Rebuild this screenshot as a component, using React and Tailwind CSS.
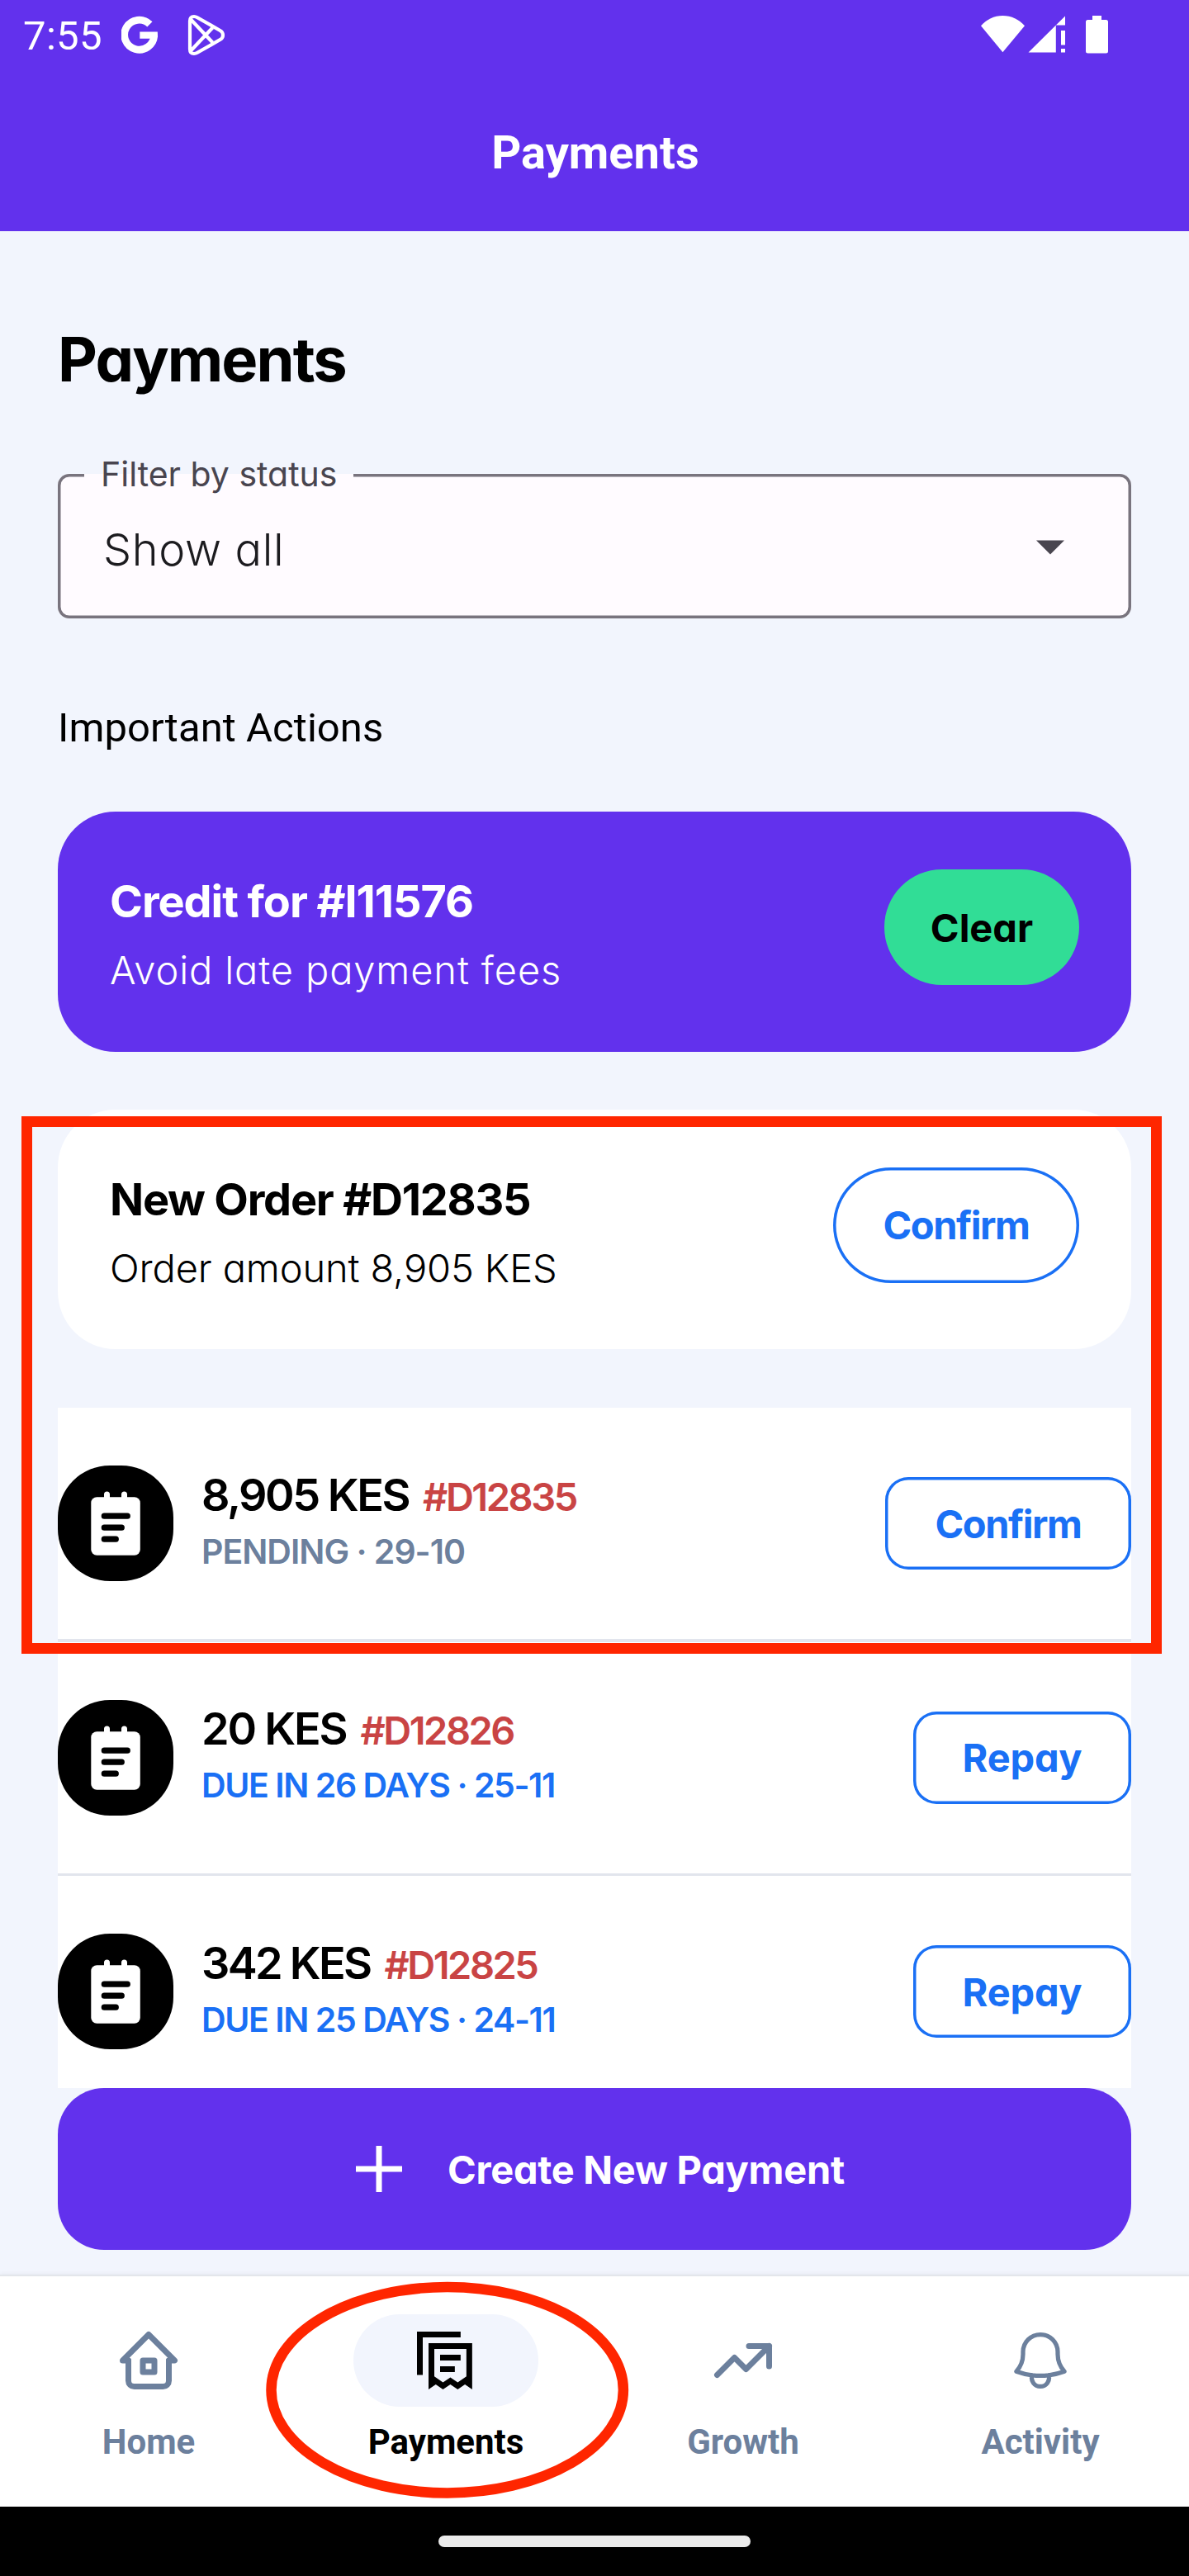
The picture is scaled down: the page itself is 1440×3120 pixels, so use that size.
import clsx from "clsx";

const brandFont = "font-['Inter',sans-serif] [font-feature-settings:'cv11']";

function StatusBar() {
  return (
    <div className="flex h-[88px] items-center pl-7 text-white">
      <span className="w-[119px] text-[49px] leading-[88px] tracking-[0.0072em]">7:55</span>
      <svg className="h-[88px] w-[44px]" viewBox="147 0 44 88">
        <path d="M181.4 29.4A18 18 0 1 0 186.7 42.6" fill="none" stroke="currentColor" strokeWidth="8.8" />
        <path d="M169.3 38.4H190.8L191 43L186 46.8H169.3Z" fill="currentColor" />
      </svg>
      <svg className="ml-9 h-[88px] w-[46px]" viewBox="227 0 46 88" fill="none" stroke="currentColor" strokeWidth="4.2">
        <path d="M230 25.5Q230 20 235 20Q237 20 239 21.2L267 37.2Q270 39 270 42.5Q270 46 267 47.8L239 63.8Q237 65 235 65Q230 65 230 59.5Z" />
        <path d="M231 23.5L257.5 51.5M231 61.5L257.5 33.5" />
      </svg>
      <svg className="mr-[97px] ml-auto h-[88px] w-[156px]" viewBox="1187 0 156 88" fill="currentColor">
        <path d="M1188 31.3C1195 23.5 1204 19 1214.4 19S1234 23.5 1241 31.3L1214.4 63.3Z" />
        <path d="M1245.5 63.5L1278.8 30.5V63.5ZM1290 19.5V30.5H1278.8Z" />
        <path d="M1285 37H1290V54.6H1285ZM1285 59H1290V63.5H1285Z" />
        <path d="M1323 19H1334V24H1339.5Q1342 24 1342 26.5V62Q1342 64.5 1339.5 64.5H1317.5Q1315 64.5 1315 62V26.5Q1315 24 1317.5 24H1323Z" />
      </svg>
    </div>
  );
}

function FilterField() {
  return (
    <div
      className={clsx(
        brandFont,
        "relative mt-[94px] flex h-[175px] items-center justify-between rounded-[14px] bg-[#fffbff] pt-2 pr-[81px] pl-[55px] shadow-[inset_0_0_0_3.5px_#79747e]"
      )}
    >
      <div className="absolute top-0 left-[32px] h-[4px] w-[326px] bg-[#fffbff]" />
      <span className="absolute -top-[25px] left-[52px] text-[41px] leading-[50px] whitespace-nowrap text-[#49454f]">
        Filter by status
      </span>
      <span className="text-[54px] leading-[64px] font-light tracking-[0.0125em] text-[#1c1b1f]">Show all</span>
      <svg className="h-[18px] w-[34px] -translate-y-[3px]" viewBox="0 0 34 18">
        <path d="M0 0.5H34L17 17.5Z" fill="#49454f" />
      </svg>
    </div>
  );
}

function ActionCard({ title, detail, button, className, titleClass, detailClass, buttonClass }) {
  return (
    <section
      className={clsx(
        brandFont,
        "flex h-[290.5px] items-start justify-between rounded-[70px] pt-[70px] pr-[63px] pl-[63px]",
        className
      )}
    >
      <div className="flex flex-col pt-[5px] whitespace-nowrap">
        <span className={clsx("text-[54px] leading-[68px] font-bold", titleClass)}>{title}</span>
        <span className={clsx("mt-[15px] text-[47px] leading-[68px] font-light", detailClass)}>{detail}</span>
      </div>
      <button className={clsx("h-[140px] rounded-[70px] pt-[2px] text-[47px] font-bold", buttonClass)}>{button}</button>
    </section>
  );
}

function NoteIcon() {
  return (
    <svg className="h-[140px] w-[140px] shrink-0 rounded-[63px] bg-black" viewBox="0 0 140 140">
      <rect x="40.3" y="38.3" width="59.5" height="70.5" rx="7" fill="#fff" />
      <path d="M59.5 40V35M80.5 40V35" stroke="#fff" strokeWidth="7" strokeLinecap="round" />
      <path d="M56.3 61.2H84.3M56.3 75.2H77.3M56.3 89.2H70.3" stroke="#000" strokeWidth="7.2" strokeLinecap="round" />
    </svg>
  );
}

const payments = [
  {
    amount: "8,905 KES", amountClass: "tracking-[-0.0462em]", id: "#D12835",
    note: "PENDING · 29-10", noteClass: "tracking-[-0.0246em] text-[#6c809d]",
    action: "Confirm", actionClass: "w-[298px] tracking-[-0.031em]",
  },
  {
    amount: "20 KES", amountClass: "tracking-[-0.0409em]", id: "#D12826",
    note: "DUE IN 26 DAYS · 25-11", noteClass: "tracking-[-0.0347em] text-[#1a70f5]",
    action: "Repay", actionClass: "w-[264px] tracking-[-0.004em]",
  },
  {
    amount: "342 KES", amountClass: "tracking-[-0.0501em]", id: "#D12825",
    note: "DUE IN 25 DAYS · 24-11", noteClass: "tracking-[-0.0347em] text-[#1a70f5]",
    action: "Repay", actionClass: "w-[264px] tracking-[-0.004em]",
  },
];

function PaymentRow({ amount, amountClass, id, note, noteClass, action, actionClass }) {
  return (
    <li>
      <div className="flex h-[280px] items-center">
        <NoteIcon />
        <div className="ml-[34px] flex flex-col pb-[6px] whitespace-nowrap">
          <div className="flex h-[60px] items-baseline font-semibold">
            <span className={clsx("text-[54px] leading-[60px] text-black", amountClass)}>{amount}</span>
            <span className="ml-[17px] text-[47px] leading-[60px] tracking-[-0.0525em] text-[#c94444]">{id}</span>
          </div>
          <span className={clsx("mt-[13px] text-[41px] leading-[50px] font-semibold", noteClass)}>{note}</span>
        </div>
        <button
          className={clsx(
            "ml-auto h-[112px] rounded-[28px] pt-[2px] text-[47px] font-bold text-[#1a70f5] shadow-[inset_0_0_0_3.5px_#1a70f5]",
            actionClass
          )}
        >
          {action}
        </button>
      </div>
      <div className="h-[3.5px] bg-[#e2e5ed]" />
    </li>
  );
}

const strokeIcon = { fill: "none", stroke: "currentColor", strokeWidth: 2, strokeLinecap: "round", strokeLinejoin: "round" };

const tabs = [
  {
    label: "Home",
    icon: (
      <g {...strokeIcon}>
        <path d="M5 12H3L12 3L21 12H19" />
        <path d="M5 12V19A2 2 0 0 0 7 21H17A2 2 0 0 0 19 19V12" />
        <path d="M10 12H14V16H10Z" />
      </g>
    ),
  },
  {
    label: "Payments",
    active: true,
    icon: (
      <g fill="currentColor">
        <path d="M2 2H17.1V4H4V17H2Z" />
        <path
          fillRule="evenodd"
          d="M6 6H21.1V22L18.6 20.25L16.1 22L13.55 20.25L11 22L8.5 20.25L6 22ZM8 8V17.5L11 19.6L13.55 17.85L16.1 19.6L19.1 17.5V8Z"
        />
        <path d="M10 10H17.1V12H10ZM10 14H15.1V16H10Z" />
      </g>
    ),
  },
  {
    label: "Growth",
    icon: (
      <g {...strokeIcon}>
        <path d="M3 17L9 11L13 15L21 7" />
        <path d="M14 7H21V14" />
      </g>
    ),
  },
  {
    label: "Activity",
    icon: (
      <path
        {...strokeIcon}
        strokeWidth="1.5"
        d="M14.857 17.082a23.848 23.848 0 0 0 5.454-1.31A8.967 8.967 0 0 1 18 9.75V9A6 6 0 0 0 6 9v.75a8.967 8.967 0 0 1-2.312 6.022c1.733.64 3.56 1.085 5.455 1.31m5.714 0a24.255 24.255 0 0 1-5.714 0m5.714 0a3 3 0 1 1-5.714 0"
      />
    ),
  },
];

function TabBar() {
  return (
    <nav className="mt-[30px] grid h-[281px] grid-cols-4 border-t-2 border-[#e3e6eb] bg-white pt-[46px] shadow-[0_-1px_5px_rgba(0,0,0,0.05)]">
      {tabs.map(({ label, icon, active }) => (
        <div key={label} className={clsx("flex flex-col items-center", active ? "text-black" : "text-[#6c809d]")}>
          <div
            className={clsx("flex h-[112px] w-[224px] items-center justify-center rounded-[56px]", active && "bg-[#f2f5fd]")}
          >
            <svg className="h-[84px] w-[84px]" viewBox="0 0 24 24">{icon}</svg>
          </div>
          <span className="mt-[18px] text-[42px] leading-[50px] font-bold">{label}</span>
        </div>
      ))}
    </nav>
  );
}

export default function App() {
  return (
    <div className="relative h-[3120px] w-[1440px] overflow-hidden bg-[#f2f5fd] font-['Roboto',sans-serif] text-black">
      <header className="h-[280px] bg-[#6231ed] text-white">
        <StatusBar />
        <div className="flex h-[192px] items-center justify-center pt-[2px] pl-[2px] text-[56px] font-bold">Payments</div>
      </header>

      <main className="px-[70px] pt-[110px]">
        <h1 className={clsx(brandFont, "text-[74px] leading-[90px] font-bold tracking-[-0.026em]")}>Payments</h1>
        <FilterField />
        <h2 className="mt-[103px] text-[49px] leading-[60px] tracking-[0.0012em]">Important Actions</h2>

        <ActionCard
          className="mt-[71px] bg-[#6231ed] text-white"
          title="Credit for #I11576"
          titleClass="tracking-[-0.0197em]"
          detail="Avoid late payment fees"
          detailClass="tracking-[0.0186em]"
          button="Clear"
          buttonClass="w-[236px] bg-[#31dd96] text-black"
        />
        <ActionCard
          className="mt-[70px] bg-white"
          title="New Order #D12835"
          titleClass="tracking-[-0.023em]"
          detail="Order amount 8,905 KES"
          detailClass="tracking-[-0.0026em]"
          button="Confirm"
          buttonClass="w-[298px] tracking-[-0.031em] text-[#1a70f5] shadow-[inset_0_0_0_3.5px_#1a70f5]"
        />

        <ul className={clsx(brandFont, "mt-[71px] h-[824px] overflow-hidden bg-white")}>
          {payments.map((payment) => (
            <PaymentRow key={payment.id} {...payment} />
          ))}
        </ul>

        <button
          className={clsx(
            brandFont,
            "flex h-[196px] w-full items-center rounded-[56px] bg-[#6231ed] pl-[361px] text-[47px] font-bold text-white"
          )}
        >
          <svg className="h-[56px] w-[56px]" viewBox="0 0 56 56" stroke="currentColor" strokeWidth="7">
            <path d="M0 28H56M28 0V56" />
          </svg>
          <span className="pt-[2px] pl-[55px] tracking-[-0.006em]">Create New Payment</span>
        </button>
      </main>

      <TabBar />

      <div className="flex h-[84px] justify-center bg-black pt-[35px]">
        <div className="h-[14px] w-[378px] rounded-[7px] bg-[#ebebeb]" />
      </div>

      <div className="absolute top-[1352px] left-[26px] h-[651px] w-[1381px] border-[13px] border-[#ff2600]" />
      <svg className="absolute top-[2763px] left-[321px] h-[264px] w-[442px]" viewBox="321 2763 442 264">
        <ellipse cx="541.7" cy="2894.7" rx="213.2" ry="124.7" fill="none" stroke="#ff2600" strokeWidth="12.5" />
      </svg>
    </div>
  );
}
